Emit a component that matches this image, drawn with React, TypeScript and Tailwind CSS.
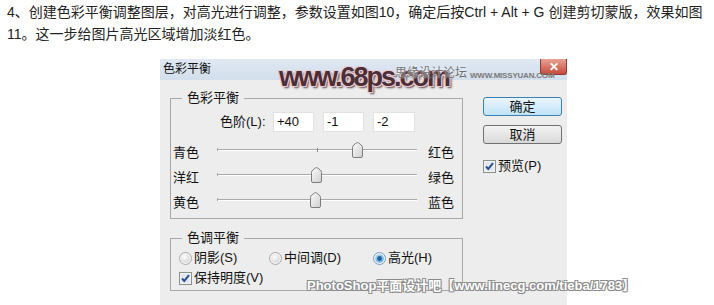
import React from "react";

const uiFont = "font-['Liberation_Sans','Noto_Sans_CJK_SC',sans-serif]";

function Thumb() {
  return (
    <svg width="11" height="16" viewBox="0 0 11 16">
      <defs>
        <linearGradient id="thumbG" x1="0" y1="0" x2="1" y2="1">
          <stop offset="0" stopColor="#fbfbfb" />
          <stop offset="1" stopColor="#cfcfcf" />
        </linearGradient>
      </defs>
      <path
        d="M0.5 14 V5.5 Q0.5 4 1.8 3 L4.3 1 Q5.5 0.2 6.7 1 L9.2 3 Q10.5 4 10.5 5.5 V14 Q10.5 15.5 9 15.5 H2 Q0.5 15.5 0.5 14 Z"
        fill="url(#thumbG)"
        stroke="#7d7d7d"
      />
    </svg>
  );
}

function Slider({ left, right, value, tick }: { left: string; right: string; value: number; tick?: boolean }) {
  const pos = ((value + 100) / 200) * 200;
  return (
    <div className="flex h-[25px] items-center">
      <span className="w-[46px] pl-[2px]">{left}</span>
      <div className="relative h-full w-[200px]">
        <div className="absolute left-0 right-0 top-[9px] h-[2px] border-t border-[#aaaaaa] bg-white" />
        <div className="absolute left-0 top-[8px] h-[3px] w-px bg-[#aaaaaa]" />
        {tick && <div className="absolute left-[100px] top-[8px] h-[4px] w-px bg-[#8a8a8a]" />}
        <div className="absolute top-[2px]" style={{ left: pos - 5 }}>
          <Thumb />
        </div>
      </div>
      <span className="ml-[11px]">{right}</span>
    </div>
  );
}

function Radio({ on }: { on?: boolean }) {
  return (
    <svg width="13" height="13" viewBox="0 0 13 13">
      <defs>
        <radialGradient id={on ? "radOn" : "radOff"} cx="0.4" cy="0.35" r="0.7">
          <stop offset="0" stopColor={on ? "#bfe3fb" : "#ffffff"} />
          <stop offset="1" stopColor={on ? "#5aa6de" : "#d4d4d4"} />
        </radialGradient>
      </defs>
      <circle cx="6.5" cy="6.5" r="6" fill="#f4f4f4" stroke={on ? "#7a9cc0" : "#a9a9a9"} />
      <circle cx="6.5" cy="6.5" r="4.3" fill={`url(#${on ? "radOn" : "radOff"})`} />
      {on && <circle cx="6.5" cy="6.5" r="2.4" fill="#1e5f9c" />}
    </svg>
  );
}

function Check() {
  return (
    <svg width="13" height="13" viewBox="0 0 13 13">
      <rect x="0.5" y="0.5" width="12" height="12" fill="#f3f3f3" stroke="#8e8f8f" />
      <rect x="2" y="2" width="9" height="9" fill="#e4e8ee" />
      <path d="M3 6.5 L5.3 9 L10 3.2" fill="none" stroke="#2b4f91" strokeWidth="2" />
    </svg>
  );
}

export default function App() {
  return (
    <div className={`relative h-[305px] w-[714px] overflow-hidden bg-white ${uiFont}`}>
      <div className="pl-[7px] pt-[1px] text-[14px] leading-[22px] text-[#222] whitespace-nowrap">
        4、创建色彩平衡调整图层，对高光进行调整，参数设置如图10，确定后按Ctrl + Alt + G 创建剪切蒙版，效果如图
        <br />
        11。这一步给图片高光区域增加淡红色。
      </div>

      <div className="ml-[160px] mt-[14px] h-[260px] w-[407px] bg-[#ededed] text-[13px] text-[#111]">
        <div className="flex h-[21px] items-start justify-between bg-linear-to-b from-[#dfe8f3] to-[#d3dfec]">
          <span className="pl-[3px] pt-[3px] text-[12px] leading-[15px]">色彩平衡</span>
          <div className="flex h-[16px] w-[27px] items-center justify-center rounded-b-[3px] border border-t-0 border-[#8c3a33] bg-linear-to-b from-[#e8a296] to-[#c5493c] text-[12px] font-bold leading-none text-white">
            ✕
          </div>
        </div>

        <div className="flex pl-[10px]">
          <div className="w-[293px]">
            <div className="relative mt-[18px] border border-[#a8a8a8] pb-[3px] pt-[13px]">
              <span className="absolute left-[11px] top-[-9px] bg-[#ededed] px-[5px] leading-[16px]">色彩平衡</span>
              <div className="flex h-[20px] items-center pl-[49px]">
                <span className="w-[53px]">色阶(L):</span>
                <div className="flex gap-[9px]">
                  <div className="flex h-[20px] w-[41px] items-center border border-[#e2e2e2] bg-white pl-[3px]">+40</div>
                  <div className="flex h-[20px] w-[41px] items-center border border-[#e2e2e2] bg-white pl-[3px]">-1</div>
                  <div className="flex h-[20px] w-[42px] items-center border border-[#e2e2e2] bg-white pl-[3px]">-2</div>
                </div>
              </div>
              <div className="mt-[8px]">
                <Slider left="青色" right="红色" value={40} tick />
                <Slider left="洋红" right="绿色" value={-1} />
                <Slider left="黄色" right="蓝色" value={-2} />
              </div>
            </div>

            <div className="relative mt-[19px] border border-[#a8a8a8] pb-[2px] pl-[8px] pt-[9px]">
              <span className="absolute left-[11px] top-[-9px] bg-[#ededed] px-[5px] leading-[16px]">色调平衡</span>
              <div className="flex h-[20px] items-center">
                <div className="flex w-[90px] items-center gap-[2px]">
                  <Radio />
                  <span>阴影(S)</span>
                </div>
                <div className="flex w-[104px] items-center gap-[2px]">
                  <Radio />
                  <span>中间调(D)</span>
                </div>
                <div className="flex items-center gap-[2px]">
                  <Radio on />
                  <span>高光(H)</span>
                </div>
              </div>
              <div className="flex h-[20px] items-center gap-[2px]">
                <Check />
                <span>保持明度(V)</span>
              </div>
            </div>
          </div>

          <div className="ml-[20px] w-[79px] pt-[17px]">
            <div className="flex h-[19px] items-center justify-center rounded-[3px] border border-[#3c7fb1] bg-linear-to-b from-[#eaf6fd] to-[#bfe2f6] leading-none">
              确定
            </div>
            <div className="mt-[9px] flex h-[19px] items-center justify-center rounded-[3px] border border-[#707070] bg-linear-to-b from-[#f3f3f3] to-[#d9d9d9] leading-none">
              取消
            </div>
            <div className="mt-[14px] flex h-[16px] items-center gap-[2px]">
              <Check />
              <span>预览(P)</span>
            </div>
          </div>
        </div>
      </div>

      {/* watermarks laid over the dialog */}
      <div className="absolute left-[279px] top-[62px] text-[27px] font-bold leading-[30px] tracking-[-2px] text-[#4c2e37] [text-shadow:1px_1px_0_#e6ccd3,-1px_-1px_0_#e6ccd3,1px_-1px_0_#e6ccd3,-1px_1px_0_#e6ccd3,2px_2px_2px_#5e424a]">
        www.68ps.com
      </div>
      <div className="absolute left-[395px] top-[66px] text-[12px] leading-[15px] text-[#707070] [text-shadow:0_0_2px_#ffffff]">
        思缘设计论坛
      </div>
      <div className="absolute left-[470px] top-[70px] text-[8px] font-bold leading-[11px] tracking-[-0.2px] text-[#7a7a7a]">
        WWW.MISSYUAN.COM
      </div>
      <div className="absolute left-[307px] top-[278px] text-[13px] font-bold leading-[16px] text-white [text-shadow:1px_1px_0_#8a8a8a,-1px_-1px_0_#8a8a8a,1px_-1px_0_#8a8a8a,-1px_1px_0_#8a8a8a]">
        PhotoShop平面设计吧【www.linecg.com/tieba/1783】
      </div>
    </div>
  );
}
